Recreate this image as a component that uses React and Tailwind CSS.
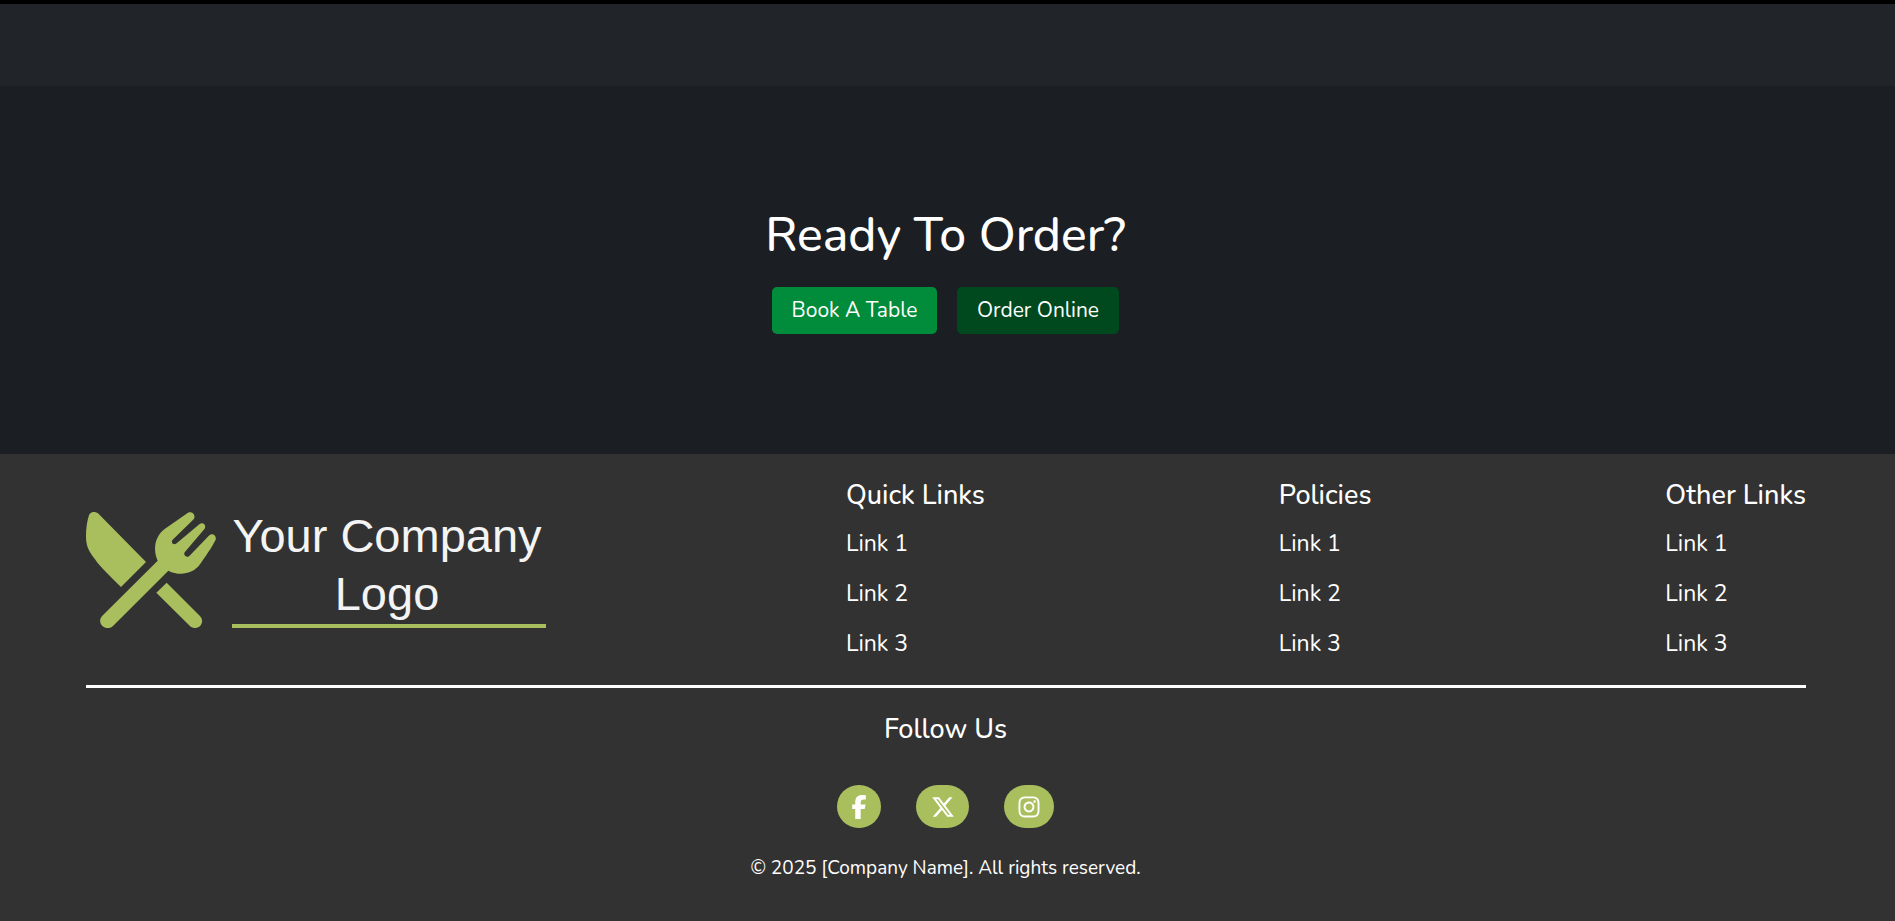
import React from 'react';
import { FaFacebookF, FaXTwitter, FaInstagram } from 'react-icons/fa6';

const columns = [
  { title: 'Quick Links', links: ['Link 1', 'Link 2', 'Link 3'] },
  { title: 'Policies', links: ['Link 1', 'Link 2', 'Link 3'] },
  { title: 'Other Links', links: ['Link 1', 'Link 2', 'Link 3'] },
];

const socials = [
  { name: 'Facebook', Icon: FaFacebookF, width: 'w-[44px]' },
  { name: 'X', Icon: FaXTwitter, width: 'w-[53px]' },
  { name: 'Instagram', Icon: FaInstagram, width: 'w-[50px]' },
];

function Logo() {
  return (
    <div className="flex items-end">
      <svg viewBox="78 93 390 348" className="w-[130px] h-[116px] fill-[#a9bf5d]" aria-hidden="true">
        <path d="M87 103C90 92 106 90 114 97L258 243L183 318C150 285 122 260 105 235C85 208 78 195 78 165C78 140 82 118 87 103Z" />
        <path d="M320 305L419 404C428 413 429 424 421 434C411 444 398 443 389 434L289 335Z" />
        <path d="M384 95C397 89 409 103 401 115L338 176C331 185 341 194 350 187L418 130C428 121 440 131 434 143L374 214C369 223 380 232 388 225L448 163C458 154 470 164 467 176C455 200 435 228 420 250C400 278 360 287 325 269L162 432C152 444 138 444 128 436C118 426 118 413 127 404L293 239C278 206 284 165 315 143Z" />
      </svg>
      <div className="ml-4 w-[314px] border-b-4 border-[#a9bf5d] pr-1 pb-px text-center font-['Liberation_Sans',sans-serif] text-[47px] leading-[58px] whitespace-nowrap text-[#f4f4f4]">
        Your Company
        <br />
        Logo
      </div>
    </div>
  );
}

export default function App() {
  return (
    <div className="min-h-screen flex flex-col bg-[#323232] font-['Nunito','Open_Sans',sans-serif] text-white">
      <div className="h-[86px] border-t-4 border-black bg-[#212529]" />

      <section className="flex h-[368px] flex-col items-center bg-[#1b1e22] pt-[120px] pr-1">
        <h2 className="text-[48px] leading-[58px] font-medium whitespace-nowrap">Ready To Order?</h2>
        <div className="mt-[23px] flex gap-5">
          <button className="h-[47px] w-[165px] rounded-[5px] bg-[#008c3a] text-[21px]">Book A Table</button>
          <button className="h-[47px] w-[162px] rounded-[5px] bg-[#00491e] text-[21px]">Order Online</button>
        </div>
      </section>

      <footer className="pt-[25px] pr-[89px] pl-[86px]">
        <div className="flex justify-between border-b-3 border-white pb-[26px]">
          <div className="mt-[28px] pr-1.5">
            <Logo />
          </div>
          {columns.map((column) => (
            <div key={column.title}>
              <h3 className="text-[27px] leading-[34px] font-medium">{column.title}</h3>
              <ul className="mt-[16px] flex flex-col gap-5 text-[23px] leading-[30px]">
                {column.links.map((link) => (
                  <li key={link}>
                    <a href="#">{link}</a>
                  </li>
                ))}
              </ul>
            </div>
          ))}
        </div>

        <div className="flex flex-col items-center pr-px">
          <h3 className="mt-[25px] text-[27px] leading-[34px] font-medium">Follow Us</h3>
          <div className="mt-[38px] flex gap-[35px]">
            {socials.map(({ name, Icon, width }) => (
              <a
                key={name}
                href="#"
                aria-label={name}
                className={`${width} flex h-[43px] items-center justify-center rounded-full bg-[#a9bf5d]`}
              >
                <Icon className="size-6" />
              </a>
            ))}
          </div>
          <p className="mt-[26px] text-[19px] leading-[28px]">© 2025 [Company Name]. All rights reserved.</p>
        </div>
      </footer>
    </div>
  );
}
